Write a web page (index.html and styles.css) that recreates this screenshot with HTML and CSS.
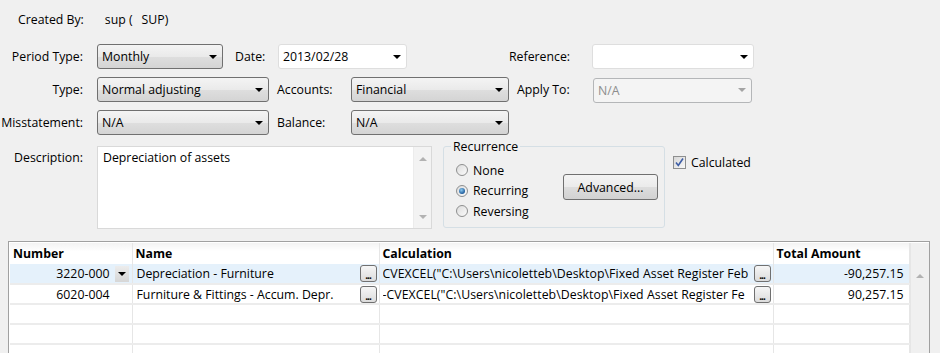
FILE: index.html
```html
<!DOCTYPE html>
<html lang="en">
<head>
  <meta charset="UTF-8">
  <title>Journal Entry</title>
  <link rel="stylesheet" href="styles.css">
</head>
<body>

  <div class="form">
    <div class="created">
      <span>Created By:</span>
      <span class="created-val">sup (</span>
      <span class="created-code">SUP)</span>
    </div>

    <div class="row first">
      <label class="lbl">Period Type:</label>
      <div class="combo w126"><span>Monthly</span><i class="arrow"></i></div>
      <label class="lbl-in date-lbl">Date:</label>
      <div class="field w129"><span>2013/02/28</span><i class="arrow"></i></div>
      <label class="lbl-in ref-lbl">Reference:</label>
      <div class="field w162"><span></span><i class="arrow"></i></div>
    </div>

    <div class="row">
      <label class="lbl">Type:</label>
      <div class="combo w172"><span>Normal adjusting</span><i class="arrow"></i></div>
      <label class="lbl-in acc-lbl">Accounts:</label>
      <div class="combo w158"><span>Financial</span><i class="arrow"></i></div>
      <label class="lbl-in apply-lbl">Apply To:</label>
      <div class="field disabled w159"><span>N/A</span><i class="arrow"></i></div>
    </div>

    <div class="row">
      <label class="lbl">Misstatement:</label>
      <div class="combo w172"><span>N/A</span><i class="arrow"></i></div>
      <label class="lbl-in acc-lbl">Balance:</label>
      <div class="combo w158"><span>N/A</span><i class="arrow"></i></div>
    </div>

    <div class="desc-row">
      <label class="lbl desc-lbl">Description:</label>
      <div class="memo">
        <div class="memo-text">Depreciation of assets</div>
        <div class="memo-scroll">
          <i class="tri-up"></i>
          <i class="tri-down"></i>
        </div>
      </div>

      <fieldset class="recurrence">
        <legend>Recurrence</legend>
        <div class="rec-body">
          <div class="radios">
            <div class="radio-row"><i class="radio"></i><span>None</span></div>
            <div class="radio-row"><i class="radio checked"></i><span>Recurring</span></div>
            <div class="radio-row"><i class="radio"></i><span>Reversing</span></div>
          </div>
          <button class="btn">Advanced...</button>
        </div>
      </fieldset>

      <div class="check-row">
        <i class="checkbox">
          <svg width="11" height="11" viewBox="0 0 11 11"><path d="M2 5.5 L4.3 8.5 L9 1.5" fill="none" stroke="#3e5ea6" stroke-width="1.6"/></svg>
        </i>
        <span>Calculated</span>
      </div>
    </div>

    <div class="grid">
      <table class="lines">
        <colgroup>
          <col class="c-num">
          <col class="c-name">
          <col class="c-calc">
          <col class="c-total">
        </colgroup>
        <thead>
          <tr>
            <th>Number</th>
            <th>Name</th>
            <th>Calculation</th>
            <th>Total Amount</th>
          </tr>
        </thead>
        <tbody>
          <tr class="selected">
            <td><div class="num-cell"><span>3220-000</span><i class="dd"><i class="arrow"></i></i></div></td>
            <td><div class="btn-cell"><span class="cell-text">Depreciation - Furniture</span><i class="dots">...</i></div></td>
            <td><div class="btn-cell calc"><span class="cell-text">CVEXCEL("C:\Users\nicoletteb\Desktop\Fixed Asset Register Feb</span><i class="dots">...</i></div></td>
            <td class="amount">-90,257.15</td>
          </tr>
          <tr>
            <td><div class="num-cell"><span>6020-004</span><i class="dd-space"></i></div></td>
            <td><div class="btn-cell"><span class="cell-text">Furniture &amp; Fittings - Accum. Depr.</span><i class="dots">...</i></div></td>
            <td><div class="btn-cell calc"><span class="cell-text">-CVEXCEL("C:\Users\nicoletteb\Desktop\Fixed Asset Register Fe</span><i class="dots">...</i></div></td>
            <td class="amount">90,257.15</td>
          </tr>
          <tr><td></td><td></td><td></td><td></td></tr>
          <tr><td></td><td></td><td></td><td></td></tr>
          <tr><td></td><td></td><td></td><td></td></tr>
        </tbody>
      </table>
      <div class="grid-scroll"><i class="tri-up"></i></div>
    </div>
  </div>

</body>
</html>
```

FILE: styles.css
```css
* {
  box-sizing: border-box;
}
body {
  margin: 0;
  width: 940px;
  height: 353px;
  overflow: hidden;
  background: #f0f0f0;
  color: #000;
  font-family: 'Open Sans', sans-serif;
  font-size: 12.3px;
  line-height: 17px;
}
.form {
  padding-top: 10px;
}
.created {
  display: flex;
  align-items: center;
  height: 18px;
  padding-left: 18px;
}
.created-val {
  margin-left: 21px;
}
.created-code {
  margin-left: 9px;
}
.row {
  display: flex;
  align-items: center;
  height: 25px;
  margin-top: 8px;
}
.row.first {
  margin-top: 16px;
}
.lbl {
  width: 83px;
  margin-right: 14px;
  text-align: right;
  flex: none;
}
.lbl-in {
  flex: none;
}
.date-lbl {
  margin-left: 12px;
  width: 43px;
}
.ref-lbl {
  margin-left: 102px;
  width: 83px;
}
.acc-lbl {
  margin-left: 8px;
  width: 74px;
}
.apply-lbl {
  margin-left: 8px;
  width: 76px;
}
.w126 { width: 126px; }
.w129 { width: 129px; }
.w158 { width: 158px; }
.w159 { width: 159px; }
.w162 { width: 162px; }
.w172 { width: 172px; }

.combo,
.field {
  flex: none;
  display: flex;
  align-items: center;
  justify-content: space-between;
  height: 25px;
  padding: 0 5px 0 4px;
  border-radius: 3px;
}
.combo {
  border: 1px solid #707070;
  background: linear-gradient(#f4f4f4, #eaeaea 50%, #dedede 52%, #d4d4d4);
}
.field {
  border: 1px solid #dedede;
  background: #fff;
}
.field.disabled {
  margin-top: 1px;
  border: 1px solid #b4b6b8;
  background: #f4f4f4;
  color: #8d8d8d;
}
.arrow {
  width: 0;
  height: 0;
  border-left: 4px solid transparent;
  border-right: 4px solid transparent;
  border-top: 4px solid #000;
}
.field.disabled .arrow {
  border-top-color: #a4a4a4;
}

.desc-row {
  display: flex;
  align-items: flex-start;
  margin-top: 11px;
  height: 83px;
}
.desc-lbl {
  padding-top: 3px;
}
.memo {
  flex: none;
  display: flex;
  width: 335px;
  height: 83px;
  border: 1px solid #d9d9d9;
  background: #fff;
}
.memo-text {
  flex: 1;
  padding: 2px 5px;
}
.memo-scroll {
  width: 18px;
  display: flex;
  flex-direction: column;
  justify-content: space-between;
  align-items: center;
  padding: 10px 0 9px;
  background: #f3f3f3;
  border-left: 1px solid #ececec;
}
.tri-up,
.tri-down {
  width: 0;
  height: 0;
  border-left: 4px solid transparent;
  border-right: 4px solid transparent;
}
.tri-up {
  border-bottom: 4px solid #b2b2b2;
}
.tri-down {
  border-top: 4px solid #b2b2b2;
}

.recurrence {
  flex: none;
  margin: -8px 0 0 11px;
  padding: 0 0 0 12px;
  width: 222px;
  height: 90px;
  border: 1px solid #d5dfe5;
  border-radius: 3px;
}
.recurrence legend {
  padding: 0 2px;
  margin-left: -5px;
}
.rec-body {
  display: flex;
  align-items: flex-start;
  padding-top: 5px;
}
.radios {
  width: 107px;
}
.radio-row {
  display: flex;
  align-items: center;
  height: 20.5px;
}
.radio-row span {
  margin-left: 5px;
}
.radio {
  position: relative;
  width: 12px;
  height: 12px;
  border-radius: 50%;
  border: 1px solid #8e8f8f;
  background: linear-gradient(135deg, #dcdcdc, #fbfbfb);
}
.radio.checked::after {
  content: '';
  position: absolute;
  left: 2px;
  top: 2px;
  width: 6px;
  height: 6px;
  border-radius: 50%;
  background: radial-gradient(circle at 40% 35%, #8ccaf0, #1f5c9c 70%);
}
.btn {
  margin-top: 14px;
  width: 95px;
  height: 26px;
  padding: 0;
  border: 1px solid #707070;
  border-radius: 3px;
  background: linear-gradient(#f4f4f4, #ebebeb 50%, #dddddd 52%, #d2d2d2);
  font-family: 'Open Sans', sans-serif;
  font-size: 12.3px;
  color: #000;
}

.check-row {
  display: flex;
  align-items: center;
  margin: 8px 0 0 8px;
}
.checkbox {
  display: flex;
  align-items: center;
  justify-content: center;
  width: 13px;
  height: 13px;
  border: 1px solid #8e8f8f;
  background: linear-gradient(135deg, #d8d8d8, #f8f8f8);
}
.check-row span {
  margin-left: 5px;
}

.grid {
  display: flex;
  margin: 12px 0 0 8px;
  width: 922px;
  height: 112px;
  overflow: hidden;
  padding: 1px 0 0 1px;
  border: 1px solid #a0a0a0;
  border-bottom: none;
  background: #fff;
}
.lines {
  width: 899px;
  table-layout: fixed;
  border-collapse: collapse;
  align-self: flex-start;
}
.c-num { width: 122px; }
.c-name { width: 247px; }
.c-calc { width: 394px; }
.c-total { width: 136px; }
.lines th {
  height: 21px;
  padding: 0 3px;
  text-align: left;
  font-weight: bold;
  background: linear-gradient(#f3f3f3, #fff 40%);
  border-right: 1px solid #e6e6e6;
}
.lines td {
  height: 20px;
  padding: 0;
  border-right: 1px solid #e6e6e6;
  border-bottom: 2px solid #ececec;
  white-space: nowrap;
  overflow: hidden;
}
.lines tr.selected td {
  background: #e5f1fb;
}
.num-cell {
  display: flex;
  align-items: center;
  justify-content: flex-end;
  padding-right: 3px;
}
.dd,
.dd-space {
  width: 14px;
  height: 16px;
  margin-left: 5px;
}
.dd {
  display: flex;
  align-items: center;
  justify-content: center;
  background: linear-gradient(#ececec, #d6d6d6);
}
.btn-cell {
  display: flex;
  align-items: center;
  padding: 0 2px 0 4px;
}
.btn-cell.calc {
  padding-left: 3px;
}
.cell-text {
  flex: 1;
  overflow: hidden;
  white-space: nowrap;
}
.calc .cell-text {
  letter-spacing: 0.05px;
}
.dots {
  flex: none;
  width: 17px;
  height: 17px;
  margin-left: 2px;
  border: 1px solid #707070;
  border-radius: 3px;
  background: linear-gradient(#f6f6f6, #dcdcdc);
  font-style: normal;
  font-weight: bold;
  font-size: 10px;
  line-height: 18px;
  text-align: center;
  letter-spacing: -1px;
}
.amount {
  text-align: right;
  padding-right: 5px !important;
}
.grid-scroll {
  flex: none;
  width: 20px;
  display: flex;
  justify-content: center;
  padding-top: 31px;
  background: #f0f0f0;
  border-left: 1px solid #e6e6e6;
}
```
